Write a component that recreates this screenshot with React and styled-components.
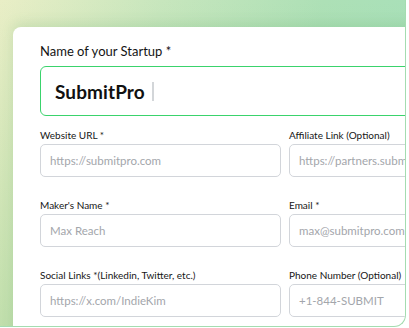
import React from 'react'
import styled, { createGlobalStyle } from 'styled-components'

const GlobalStyle = createGlobalStyle`
    html, body {
        margin: 0;
        padding: 0;
        background: #ffffff;
    }
    body {
        font-family: Lato, "Open Sans", sans-serif;
        color: #141414;
    }
`

const Frame = styled.div`
    box-sizing: border-box;
    width: 406px;
    height: 327px;
    padding: 27px 0 0 13px;
    overflow: hidden;
    border-right: 1.5px solid #a4dcb0;
    border-bottom: 1.5px solid #a4dcb0;
    border-bottom-right-radius: 12px;
    background:
        linear-gradient(180deg, rgba(255,255,255,0) 0%, rgba(140,200,130,0.35) 100%),
        linear-gradient(100deg, #e9eec6 0%, #c7e6bd 35%, #ade0b6 70%, #a6e0ba 100%);
`

const Card = styled.div`
    box-sizing: border-box;
    width: 560px;
    height: 320px;
    padding: 16px 0 0 27px;
    background: #ffffff;
    border-top-left-radius: 8px;
    box-shadow: 0 -4px 12px rgba(90, 160, 100, 0.18);
`

const Title = styled.label`
    display: block;
    font-size: 13px;
    line-height: 17px;
    color: #141414;
    margin-bottom: 6px;
`

const MainField = styled.div`
    box-sizing: border-box;
    width: 490px;
    height: 50px;
    display: flex;
    align-items: center;
    padding-left: 14px;
    border: 1.5px solid #3ad36c;
    border-radius: 6px;
`

const MainValue = styled.span`
    font-size: 19px;
    font-weight: 700;
    color: #111111;
    letter-spacing: 0.1px;
`

const Caret = styled.span`
    width: 2px;
    height: 19px;
    margin-left: 7px;
    background: #d3d6d9;
`

const Grid = styled.div`
    display: grid;
    grid-template-columns: 241px 241px;
    column-gap: 8px;
    row-gap: 21px;
    margin-top: 12px;
`

const Field = styled.div`
    display: flex;
    flex-direction: column;
    gap: 2px;
`

const Label = styled.label`
    font-size: 10px;
    line-height: 14px;
    color: #161616;
    white-space: nowrap;
`

const Input = styled.input`
    box-sizing: border-box;
    width: 100%;
    height: 33px;
    padding: 0 9px;
    border: 1px solid #d2d5da;
    border-radius: 5px;
    font-family: Lato, "Open Sans", sans-serif;
    font-size: 11.5px;
    color: #333;
    outline: none;
    background: #fff;

    &::placeholder {
        color: #a3a6ab;
    }
`

const fields = [
    { label: 'Website URL *', placeholder: 'https://submitpro.com' },
    { label: 'Affiliate Link (Optional)', placeholder: 'https://partners.submitpro.com' },
    { label: "Maker's Name *", placeholder: 'Max Reach' },
    { label: 'Email *', placeholder: 'max@submitpro.com' },
    { label: 'Social Links *(Linkedin, Twitter, etc.)', placeholder: 'https://x.com/IndieKim' },
    { label: 'Phone Number (Optional)', placeholder: '+1-844-SUBMIT' },
]

function App() {
    return (
        <>
            <GlobalStyle />
            <Frame>
                <Card>
                    <Title>Name of your Startup *</Title>
                    <MainField>
                        <MainValue>SubmitPro</MainValue>
                        <Caret />
                    </MainField>
                    <Grid>
                        {fields.map(f => (
                            <Field key={f.label}>
                                <Label>{f.label}</Label>
                                <Input readOnly placeholder={f.placeholder} />
                            </Field>
                        ))}
                    </Grid>
                </Card>
            </Frame>
        </>
    )
}

export default App
